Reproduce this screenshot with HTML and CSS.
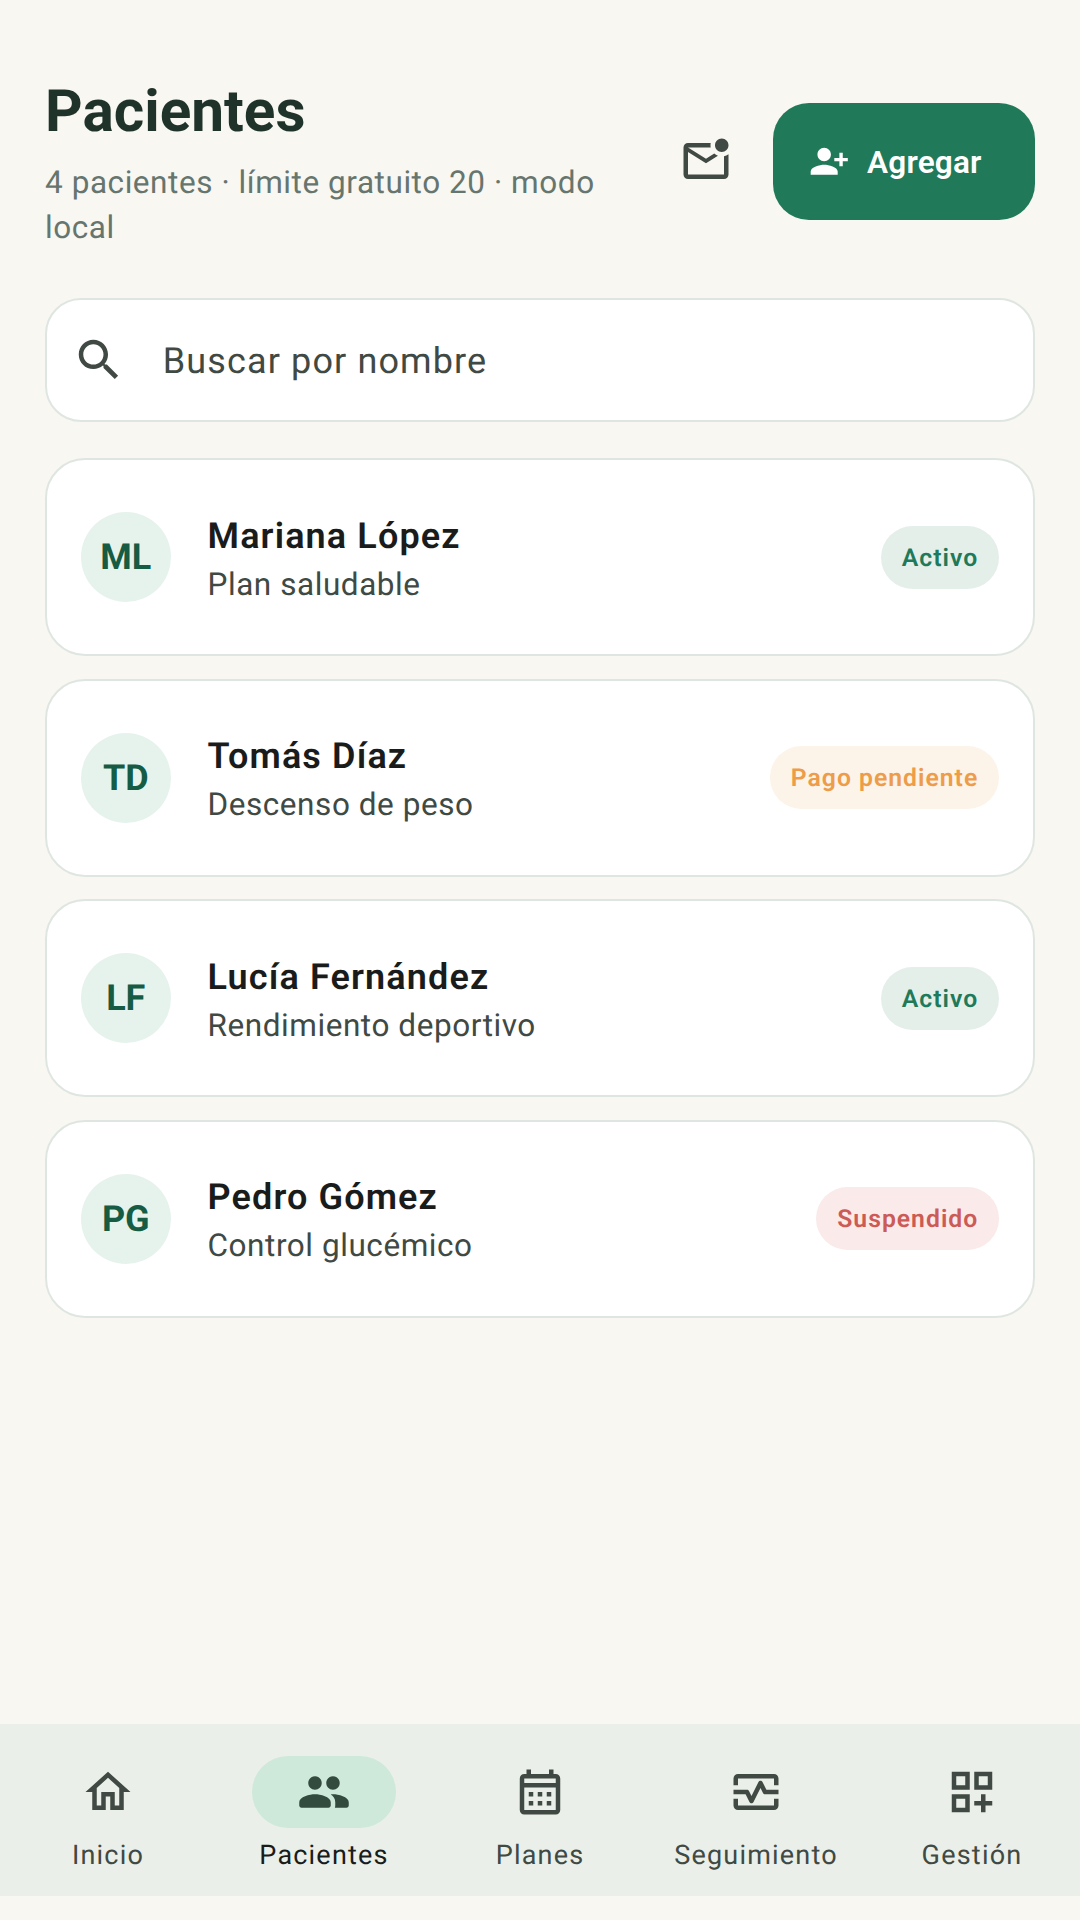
FILE: index.html
```html
<!DOCTYPE html>
<html lang="es">
<head>
<meta charset="utf-8">
<title>Pacientes</title>
<link rel="stylesheet" href="styles.css">
</head>
<body>
<main class="content">
  <header class="header">
    <div class="heading">
      <h1 class="title">Pacientes</h1>
      <p class="subtitle">4 pacientes · límite gratuito 20 · modo local</p>
    </div>
    <button class="icon-button" aria-label="Mensajes">
      <svg class="icon" viewBox="0 0 24 24"><path d="M22 8.98V18c0 1.1-.9 2-2 2H4c-1.1 0-2-.9-2-2V6c0-1.1.9-2 2-2h10.1c-.06.32-.1.66-.1 1s.04.68.1 1H4l8 5 3.67-2.29c.47.43 1.02.76 1.63.98L12 13 4 8v10h16V9.9c.74-.15 1.42-.48 2-.92zM16 5c0 1.66 1.34 3 3 3s3-1.34 3-3-1.34-3-3-3-3 1.34-3 3z"/></svg>
    </button>
    <button class="add-button">
      <svg class="add-icon" viewBox="0 0 24 24"><g transform="translate(24 0) scale(-1 1)"><path d="M15 12c2.21 0 4-1.79 4-4s-1.79-4-4-4-4 1.79-4 4 1.79 4 4 4zm-9-2V7H4v3H1v2h3v3h2v-3h3v-2H6zm9 4c-2.67 0-8 1.34-8 4v2h16v-2c0-2.66-5.33-4-8-4z"/></g></svg>
      <span class="add-label">Agregar</span>
    </button>
  </header>

  <div class="search">
    <svg class="icon" viewBox="0 0 24 24"><path d="M15.5 14h-.79l-.28-.27C15.41 12.59 16 11.11 16 9.5 16 5.91 13.09 3 9.5 3S3 5.91 3 9.5 5.91 16 9.5 16c1.61 0 3.09-.59 4.23-1.57l.27.28v.79l5 4.99L20.49 19l-4.99-5zm-6 0C7.01 14 5 11.99 5 9.5S7.01 5 9.5 5 14 7.01 14 9.5 11.99 14 9.5 14z"/></svg>
    <span class="search-text">Buscar por nombre</span>
  </div>

  <ul class="patients">
    <li class="card">
      <div class="avatar">ML</div>
      <div class="info"><div class="name">Mariana López</div><div class="plan">Plan saludable</div></div>
      <span class="badge badge-active">Activo</span>
    </li>
    <li class="card">
      <div class="avatar">TD</div>
      <div class="info"><div class="name">Tomás Díaz</div><div class="plan">Descenso de peso</div></div>
      <span class="badge badge-pending">Pago pendiente</span>
    </li>
    <li class="card">
      <div class="avatar">LF</div>
      <div class="info"><div class="name">Lucía Fernández</div><div class="plan">Rendimiento deportivo</div></div>
      <span class="badge badge-active">Activo</span>
    </li>
    <li class="card">
      <div class="avatar">PG</div>
      <div class="info"><div class="name">Pedro Gómez</div><div class="plan">Control glucémico</div></div>
      <span class="badge badge-suspended">Suspendido</span>
    </li>
  </ul>
</main>

<nav class="nav">
  <a class="nav-item">
    <span class="nav-pill"><svg class="icon" viewBox="0 0 24 24"><path d="M12 5.69l5 4.5V18h-2v-6H9v6H7v-7.81l5-4.5M12 3L2 12h3v8h6v-6h2v6h6v-8h3L12 3z"/></svg></span>
    <span class="nav-label">Inicio</span>
  </a>
  <a class="nav-item nav-item-active">
    <span class="nav-pill"><svg class="icon" viewBox="0 0 24 24"><path d="M16 11c1.66 0 2.99-1.34 2.99-3S17.66 5 16 5s-3 1.34-3 3 1.34 3 3 3zm-8 0c1.66 0 2.99-1.34 2.99-3S9.66 5 8 5 5 6.34 5 8s1.34 3 3 3zm0 2c-2.33 0-7 1.17-7 3.5V18c0 .55.45 1 1 1h12c.55 0 1-.45 1-1v-1.5c0-2.33-4.67-3.5-7-3.5zm8 0c-.29 0-.62.02-.97.05.02.01.03.03.04.04 1.14.83 1.93 1.94 1.93 3.41V18c0 .35-.07.69-.18 1H22c.55 0 1-.45 1-1v-1.5c0-2.33-4.67-3.5-7-3.5z"/></svg></span>
    <span class="nav-label">Pacientes</span>
  </a>
  <a class="nav-item">
    <span class="nav-pill"><svg class="icon" viewBox="0 0 24 24"><path d="M19 4h-1V2h-2v2H8V2H6v2H5C3.89 4 3.01 4.9 3.01 6L3 20c0 1.1.89 2 2 2h14c1.1 0 2-.9 2-2V6c0-1.1-.9-2-2-2zm0 16H5V10h14v10zm0-12H5V6h14v2zM9 14H7v-2h2v2zm4 0h-2v-2h2v2zm4 0h-2v-2h2v2zM9 18H7v-2h2v2zm4 0h-2v-2h2v2zm4 0h-2v-2h2v2z"/></svg></span>
    <span class="nav-label">Planes</span>
  </a>
  <a class="nav-item">
    <span class="nav-pill"><svg class="icon" viewBox="0 0 24 24"><path d="M20 4H4c-1.1 0-2 .9-2 2v3h2V6h16v3h2V6c0-1.1-.9-2-2-2zm0 14H4v-3H2v3c0 1.1.9 2 2 2h16c1.1 0 2-.9 2-2v-3h-2v3z"/><path d="M14.89 7.55c-.34-.68-1.45-.68-1.79 0L10 13.76l-1.11-2.21C8.72 11.21 8.38 11 8 11H2v2h5.38l1.72 3.45c.18.34.52.55.9.55s.72-.21.89-.55L14 10.24l1.11 2.21c.17.34.51.55.89.55h6v-2h-5.38l-1.72-3.45z"/></svg></span>
    <span class="nav-label">Seguimiento</span>
  </a>
  <a class="nav-item">
    <span class="nav-pill"><svg class="icon" viewBox="0 0 24 24"><path d="M3 11h8V3H3v8zm2-6h4v4H5V5zm8-2v8h8V3h-8zm6 6h-4V5h4v4zM3 21h8v-8H3v8zm2-6h4v4H5v-4zm13-2h-2v3h-3v2h3v3h2v-3h3v-2h-3z"/></svg></span>
    <span class="nav-label">Gestión</span>
  </a>
</nav>
</body>
</html>
```

FILE: styles.css
```css
* { box-sizing: border-box; }

html, body { height: 100%; }

body {
  margin: 0;
  height: 1920px;
  padding-bottom: 24px;
  display: flex;
  flex-direction: column;
  background: #f8f7f2;
  font-family: Roboto, "Noto Sans", sans-serif;
  color: #191c1a;
  text-rendering: geometricPrecision;
  -webkit-font-smoothing: antialiased;
}

.content {
  flex: 1;
  padding: 75px 45px 0;
}

.header {
  display: flex;
  align-items: center;
}

.heading {
  flex: 1;
  min-width: 0;
  padding-right: 36px;
}

.title {
  margin: 0 0 10.5px;
  font-size: 58.5px;
  line-height: 74px;
  font-weight: 700;
  color: #1f332b;
}

.subtitle {
  margin: 0;
  font-size: 31.5px;
  line-height: 45px;
  letter-spacing: 0.56px;
  color: #66756e;
}

.icon-button {
  width: 108px;
  height: 108px;
  margin: 0 13.5px 2.5px 0;
  display: flex;
  align-items: center;
  justify-content: center;
  padding: 0;
  border: 0;
  background: none;
}

.icon {
  width: 54px;
  height: 54px;
  flex: none;
  display: block;
  fill: #404943;
}

.add-button {
  width: 262px;
  height: 117px;
  margin-bottom: 1.5px;
  flex: none;
  display: flex;
  align-items: center;
  gap: 17.5px;
  padding: 0 54px 0 36px;
  border: 0;
  border-radius: 36px;
  background: #207a5a;
  color: #fff;
  font-family: inherit;
  font-size: 31.5px;
  font-weight: 600;
  letter-spacing: 0.22px;
}

.add-icon {
  width: 40.5px;
  height: 40.5px;
  flex: none;
  fill: #fff;
}

.add-label {
  padding-top: 2px;
}

.search {
  margin-top: 48.25px;
  height: 124.5px;
  display: flex;
  align-items: center;
  gap: 37px;
  padding: 0 24.75px;
  background: #fff;
  border: 2.25px solid #dfe6e1;
  border-radius: 36px;
}

.search-text {
  padding-top: 2px;
  font-size: 36px;
  letter-spacing: 1.125px;
  color: #404943;
}

.patients {
  list-style: none;
  margin: 36px 0 0;
  padding: 0;
  display: flex;
  flex-direction: column;
  gap: 22.5px;
}

.card {
  height: 198px;
  display: flex;
  align-items: center;
  padding: 0 33.75px;
  background: #fff;
  border: 2.25px solid #dfe6e1;
  border-radius: 40px;
}

.avatar {
  width: 90px;
  height: 90px;
  flex: none;
  display: flex;
  align-items: center;
  justify-content: center;
  border-radius: 50%;
  background: #e6f3ed;
  color: #165c44;
  font-size: 36px;
  font-weight: 700;
}

.info {
  flex: 1;
  min-width: 0;
  margin-left: 36.75px;
  padding-top: 5px;
}

.name {
  font-size: 36px;
  line-height: 45px;
  font-weight: 650;
  letter-spacing: 1.125px;
  color: #191c1a;
}

.plan {
  margin-top: 4.7px;
  font-size: 31.5px;
  line-height: 42px;
  letter-spacing: 0.56px;
  color: #404943;
}

.badge {
  height: 63px;
  display: flex;
  align-items: center;
  padding: 2px 21px 0;
  border-radius: 31.5px;
  font-size: 24.75px;
  font-weight: 650;
  letter-spacing: 1px;
}

.badge-active { background: #e5efea; color: #207a5a; }
.badge-pending { background: #fcf3e9; color: #ed9c4a; }
.badge-suspended { background: #faeaea; color: #cc5a55; }

.nav {
  height: 172px;
  flex: none;
  display: grid;
  grid-template-columns: repeat(5, 1fr);
  background: #eaefe9;
}

.nav-item {
  display: flex;
  flex-direction: column;
  align-items: center;
  padding-top: 31.5px;
  color: #404943;
}

.nav-pill {
  width: 144px;
  height: 72px;
  display: flex;
  align-items: center;
  justify-content: center;
  border-radius: 36px;
}

.nav-label {
  margin-top: 5px;
  font-size: 27px;
  line-height: 45px;
  letter-spacing: 1.2px;
  font-weight: 400;
}

.nav-item-active .nav-pill { background: #cee9da; }
.nav-item-active .icon { fill: #334a3f; }
.nav-item-active .nav-label { color: #191c1a; font-weight: 450; }
```
